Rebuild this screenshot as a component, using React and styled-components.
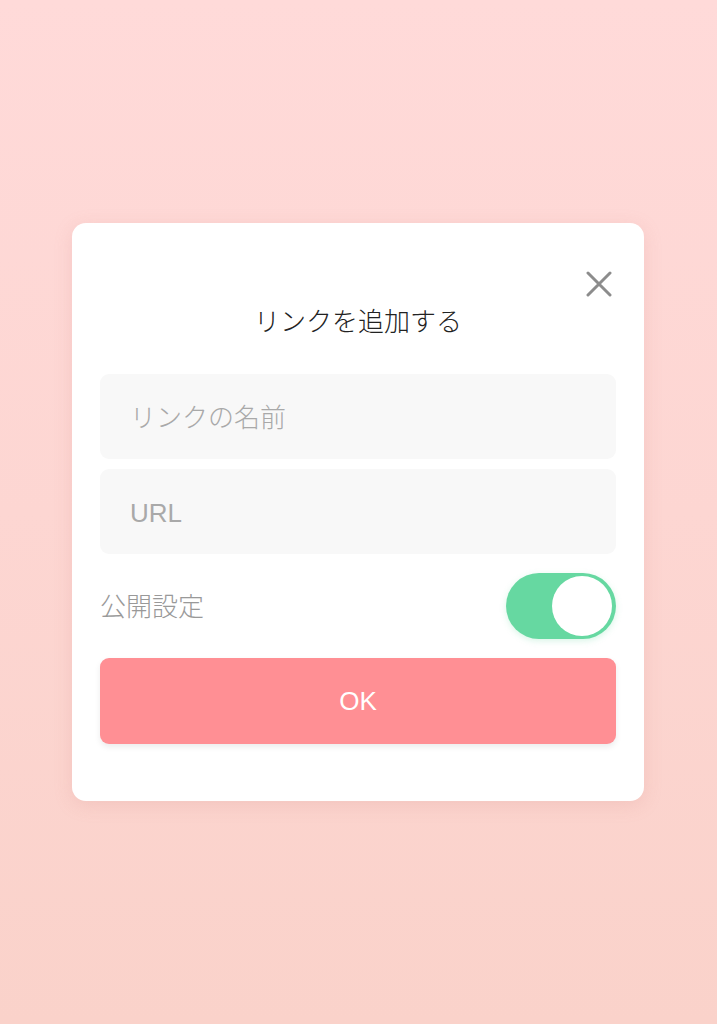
import React, { useState } from 'react';
import styled, { createGlobalStyle } from 'styled-components';

const GlobalStyle = createGlobalStyle`
  html, body {
    margin: 0;
    padding: 0;
    height: 100%;
  }
  body {
    font-family: "Liberation Sans", "Noto Sans CJK JP", sans-serif;
  }
`;

const Page = styled.div`
  min-height: 100vh;
  display: flex;
  align-items: center;
  justify-content: center;
  padding-right: 1px;
  box-sizing: border-box;
  background: linear-gradient(180deg, #ffdad9 0%, #fdd6d2 50%, #fad2ca 100%);
`;

const Card = styled.div`
  box-sizing: border-box;
  width: 572px;
  padding: 44px 28px 57px;
  background: #fff;
  border-radius: 14px;
  box-shadow: 0 4px 18px rgba(214, 140, 136, 0.22);
  display: flex;
  flex-direction: column;
`;

const Header = styled.div`
  display: flex;
  justify-content: flex-end;
`;

const CloseButton = styled.button`
  width: 34px;
  height: 34px;
  padding: 0;
  border: none;
  background: none;
  display: flex;
  align-items: center;
  justify-content: center;
  cursor: pointer;
`;

const Title = styled.h2`
  margin: 5px 0 36px;
  font-size: 26px;
  line-height: 32px;
  font-weight: 300;
  color: #222;
  text-align: center;
`;

const Fields = styled.div`
  display: flex;
  flex-direction: column;
  gap: 10px;
`;

const Input = styled.input`
  box-sizing: border-box;
  width: 100%;
  height: 85px;
  padding: 4px 30px 0;
  border: none;
  border-radius: 9px;
  background: #f8f8f8;
  font-family: inherit;
  font-size: 26px;
  font-weight: 300;
  color: #333;
  outline: none;

  &::placeholder {
    color: #a9a9a9;
  }
`;

const Row = styled.div`
  display: flex;
  align-items: center;
  justify-content: space-between;
  margin: 19px 0;
`;

const Label = styled.span`
  font-size: 26px;
  font-weight: 300;
  color: #999;
  margin-top: -3px;
`;

const Track = styled.button`
  box-sizing: border-box;
  width: 110px;
  height: 66px;
  padding: 3px 4px;
  border: none;
  border-radius: 33px;
  background: ${p => (p.$on ? '#66d8a1' : '#e4e4e4')};
  box-shadow: 0 2px 6px rgba(102, 216, 161, 0.25);
  display: flex;
  align-items: center;
  justify-content: ${p => (p.$on ? 'flex-end' : 'flex-start')};
  cursor: pointer;
`;

const Knob = styled.span`
  width: 60px;
  height: 60px;
  border-radius: 50%;
  background: #fff;
`;

const OkButton = styled.button`
  height: 86px;
  border: none;
  border-radius: 9px;
  background: #ff8f94;
  box-shadow: 0 3px 6px rgba(0, 0, 0, 0.08);
  color: #fff;
  font-family: inherit;
  font-size: 26px;
  cursor: pointer;
`;

function CloseIcon() {
  return (
    <svg width="26" height="26" viewBox="0 0 26 26">
      <path d="M2 2 L24 24 M24 2 L2 24" stroke="#8c8c8c" strokeWidth="3" strokeLinecap="round" />
    </svg>
  );
}

function App() {
  const [isPublic, setIsPublic] = useState(true);

  return (
    <Page>
      <GlobalStyle />
      <Card>
        <Header>
          <CloseButton aria-label="close">
            <CloseIcon />
          </CloseButton>
        </Header>
        <Title>リンクを追加する</Title>
        <Fields>
          <Input placeholder="リンクの名前" />
          <Input placeholder="URL" />
        </Fields>
        <Row>
          <Label>公開設定</Label>
          <Track role="switch" aria-checked={isPublic} $on={isPublic} onClick={() => setIsPublic(!isPublic)}>
            <Knob />
          </Track>
        </Row>
        <OkButton>OK</OkButton>
      </Card>
    </Page>
  );
}

export default App;
